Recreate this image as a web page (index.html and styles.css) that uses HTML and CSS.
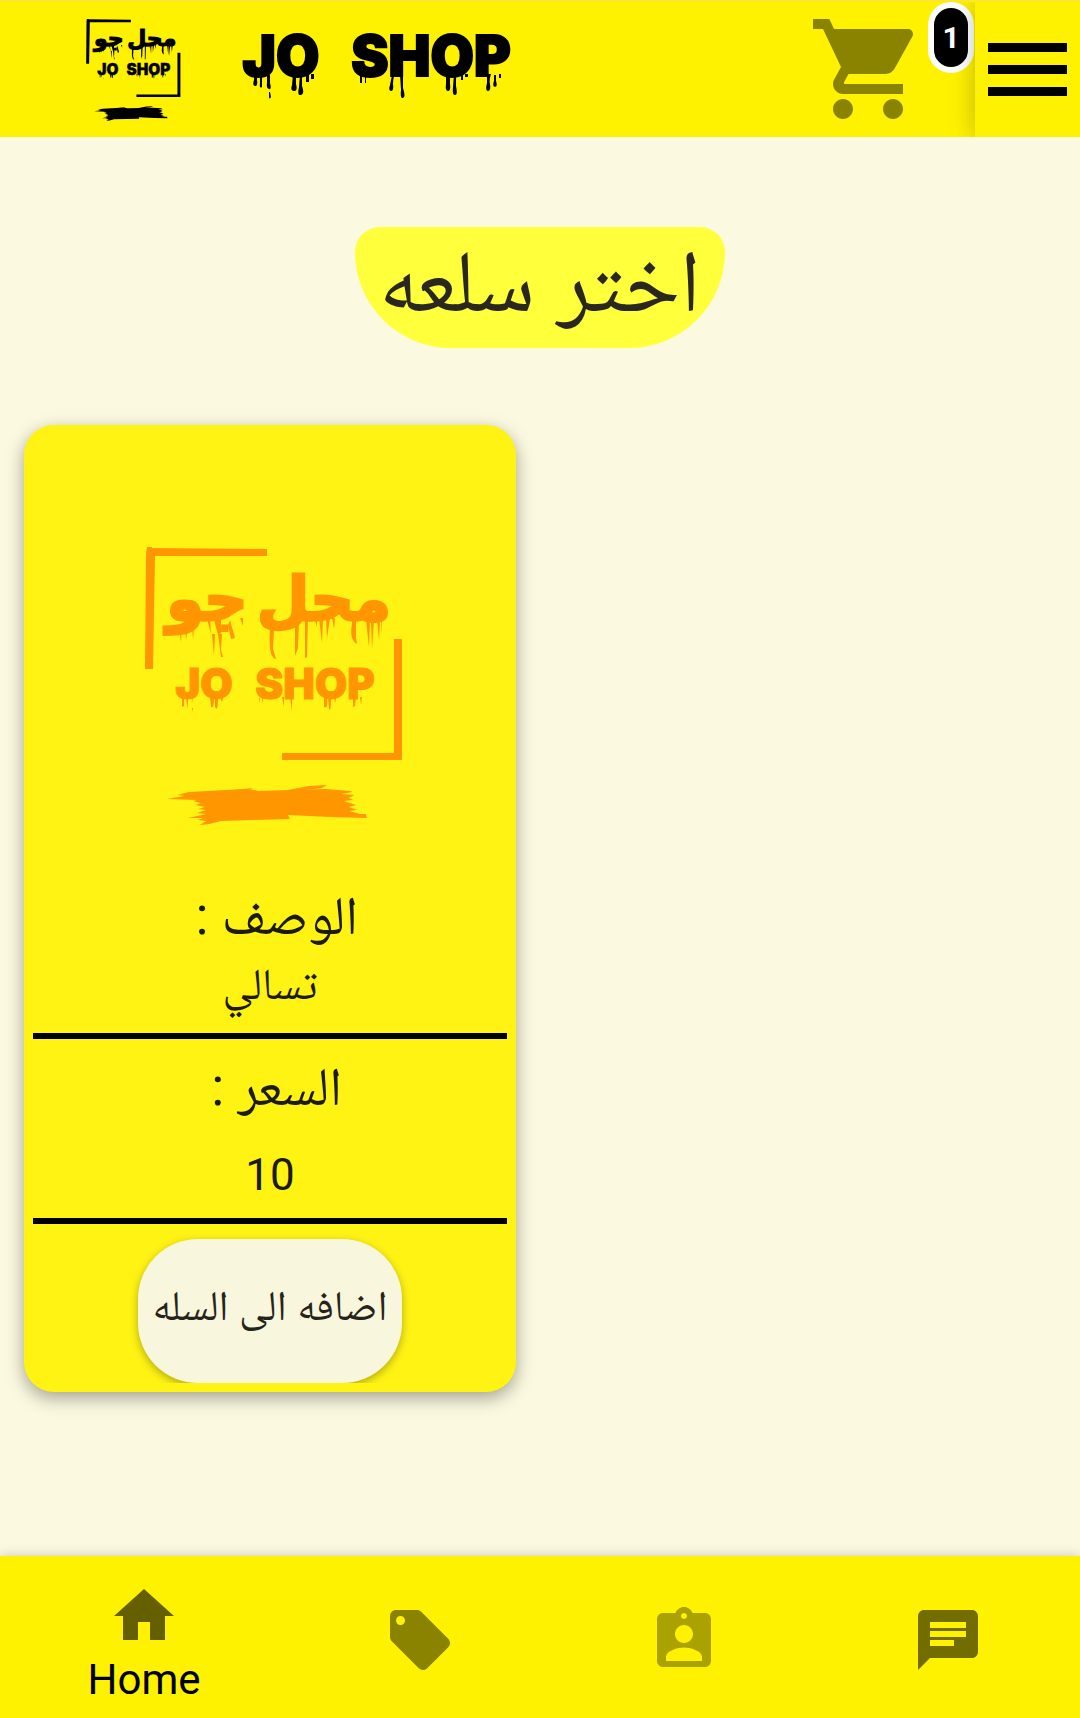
FILE: index.html
```html
<!DOCTYPE html>
<html lang="ar">
<head>
<meta charset="utf-8">
<meta name="viewport" content="width=device-width, initial-scale=1">
<title>JO SHOP</title>
<link rel="stylesheet" href="styles.css">
</head>
<body>
<svg class="defs" aria-hidden="true">
  <symbol id="logo" viewBox="-5 0 310 330">
    <path d="M27 27h5v1l115 1v7H35L33 149h-8L26 33z"/>
    <path d="M274 119h8v121H162v-7h112z"/>
    <text class="logo-ar" x="204" y="100" text-anchor="middle">محل</text>
    <text class="logo-ar" x="87" y="100" text-anchor="middle">جو</text>
    <text class="logo-en" x="84" y="179" text-anchor="middle">JO</text>
    <text class="logo-en" x="195" y="179" text-anchor="middle">SHOP</text>
    <path d="M59 108l3 0-1 14zM65 108h3l-2 12zM72 108h2l-1 11zM87 99h3l1 15zM94 100h7l0 13-3 2zM92 114l3 0-1 22zM98 114l4 0-1 16 2 7-2 0zM110 100l5 18-4 1-3-14zM120 98h3l0 8zM150 110l4 0-1 19 3 10q-8-1-6-29zM175 100l4 0-1 28-3 8zM185 98h3l-1 39-2 1zM194 98h3l0 9zM199 98l4 0-1 25zM206 98h4l-3 20zM212 98h3l-1 11zM232 100l4 1 0 16 1 7q-8-4-5-20zM246 100h4l-1 27zM251 100h3l-2 29zM257 100h3l-1 20zM261 98h1l-1 17z"/>
    <path d="M62 178h2l0 8-2 1zM66 178h2l0 11zM72 177h1v6zM72 188h1v4zM90 178h4q0 11-3 9zM95 178h3q0 15-3 9zM100 178h3l-1 4zM139 178h1v5zM142 178h1v6zM162 177h2v10zM170 176h2v16zM204 178h3q1 12-3 9zM208 178h3q0 15-2 11zM214 178h2l-1 5zM233 176h3l-1 10-2 1zM240 177h2l-1 8z"/>
    <g transform="scale(.96 1)">
      <path d="M49 279l18-3-7-1 12-3 38-2 24-1 10 2 32-1 38-1 26 2 2 1-12 2 14 1-6 3 5 2-10 1 13 4-8 2 9 3-8 1 11 3 6 0 1 4-38-1-44-2 2 4-37 1-35 1-12 3-10 1 7-4-9-1 6-2-16 0 19-4-10-1 10-3-8-1 6-2-9-2 5-2-8-2 4-1z"/>
      <path d="M105 271l34-3-8 3zM175 270l22-4 19-1-6 3-24 3z"/>
    </g>
  </symbol>
</svg>

<header class="topbar">
  <div class="brand">
    <svg class="brand-mark" role="img" aria-label="JO SHOP"><use href="#logo"/></svg>
    <svg class="brand-name" viewBox="0 -16 300 96">
      <text x="50" y="49" text-anchor="middle">JO</text>
      <text x="200" y="49" text-anchor="middle">SHOP</text>
      <path d="M23 45h3v8q1 6-2 6t-1-6zM29 48h2v12q-3 2-2-4zM36 48h3v8q2 7-1 6t-2-6zM38 65h1l1 5q-2 3-2 0zM62 47h3v10q2 7-2 7t-2-6zM69 47h2v12q3 8-1 9t-2-8zM75 47h3v8h-3zM80 47h3v5h-3zM129 48h2v8h-2zM134 48h1v8h-1zM161 48l2 1q-1 4-1 8 1 7-2 7t-1-6zM169 47h3v14q3 9 0 10t-2-8zM215 47h4v10q1 7-2 7t-2-7zM223 47h2v12q2 9-1 9t-2-8zM230 47h2v6h-2zM234 47h3v3h-3zM256 47h4q-2 6-1 10 1 7-2 7t-1-8zM263 48h2v6q2 6-1 6t-1-6zM268 47h2v4h-2z"/>
    </svg>
  </div>
  <button class="cart" type="button" aria-label="Cart">
    <svg viewBox="0 0 24 24" aria-hidden="true"><path d="M7 18c-1.100 0-1.990.9-1.990 2S5.900 22 7 22s2-.9 2-2-.9-2-2-2zM1 2v2h2l3.600 7.590-1.350 2.450c-.16.280-.25.610-.25.960 0 1.100.9 2 2 2h12v-2H7.420c-.14 0-.25-.11-.25-.25l.03-.12.900-1.630h7.450c.75 0 1.410-.41 1.750-1.030l3.580-6.490c.08-.14.120-.31.120-.48 0-.55-.45-1-1-1H5.210l-.94-2H1zm16 16c-1.100 0-1.990.9-1.990 2s.89 2 1.990 2 2-.9 2-2-.9-2-2-2z"/></svg>
    <span class="badge">1</span>
  </button>
  <button class="menu" type="button" aria-label="Menu"><span></span><span></span><span></span></button>
</header>

<main class="content" dir="rtl">
  <h1 class="title">اختر سلعه</h1>
  <section class="products">
    <article class="card">
      <svg class="card-logo" role="img" aria-label="JO SHOP"><use href="#logo"/></svg>
      <div class="field">
        <h2>الوصف :&nbsp;</h2>
        <p>تسالي</p>
      </div>
      <div class="field price">
        <h2>السعر :&nbsp;</h2>
        <p>10</p>
      </div>
      <div class="action">
        <button class="add" type="button">اضافه الى السله</button>
      </div>
    </article>
  </section>
</main>

<nav class="tabs">
  <a class="tab active" href="#home">
    <svg viewBox="0 0 24 24" aria-hidden="true"><path d="M10 20v-6h4v6h5v-8h3L12 3 2 12h3v8z"/></svg>
    <span>Home</span>
  </a>
  <a class="tab offers" href="#offers" aria-label="Offers">
    <svg viewBox="0 0 24 24" aria-hidden="true"><path d="M21.410 11.580l-9-9C12.050 2.220 11.550 2 11 2H4c-1.100 0-2 .9-2 2v7c0 .55.220 1.050.590 1.420l9 9c.36.360.860.580 1.410.580.550 0 1.050-.22 1.410-.59l7-7c.37-.36.590-.86.590-1.410 0-.55-.23-1.060-.59-1.420zM5.500 7C4.670 7 4 6.330 4 5.500S4.670 4 5.500 4 7 4.670 7 5.500 6.330 7 5.500 7z"/></svg>
  </a>
  <a class="tab account" href="#account" aria-label="Account">
    <svg viewBox="0 0 24 24" aria-hidden="true"><path d="M19 3h-4.180C14.400 1.840 13.300 1 12 1c-1.300 0-2.400.84-2.820 2H5c-1.100 0-2 .9-2 2v14c0 1.100.9 2 2 2h14c1.100 0 2-.9 2-2V5c0-1.100-.9-2-2-2zm-7 0c.55 0 1 .45 1 1s-.45 1-1 1-1-.45-1-1 .45-1 1-1zm0 4c1.660 0 3 1.340 3 3s-1.340 3-3 3-3-1.340-3-3 1.340-3 3-3zm6 12H6v-1.400c0-2 4-3.100 6-3.100s6 1.100 6 3.100V19z"/></svg>
  </a>
  <a class="tab chat" href="#chat" aria-label="Chat">
    <svg viewBox="0 0 24 24" aria-hidden="true"><path d="M20 2H4c-1.100 0-1.990.9-1.990 2L2 22l4-4h14c1.100 0 2-.9 2-2V4c0-1.100-.9-2-2-2zM6 9h12v2H6V9zm8 5H6v-2h8v2zm4-6H6V6h12v2z"/></svg>
  </a>
</nav>
</body>
</html>
```
FILE: styles.css
```css
* {
  box-sizing: border-box;
}

body {
  margin: 0;
  min-height: 100vh;
  display: flex;
  flex-direction: column;
  background: #fbf9df;
  color: #1c1a08;
  font-family: Roboto, "Noto Naskh Arabic", "Noto Sans Arabic", "DejaVu Sans", sans-serif;
}

h1, h2, p {
  margin: 0;
  font-weight: 400;
}

button {
  border: 0;
  padding: 0;
  background: none;
  color: inherit;
  font: inherit;
}

.defs {
  display: none;
}

.logo-ar {
  font-family: "DejaVu Sans", sans-serif;
  font-size: 60px;
  font-weight: 700;
  stroke: currentColor;
  stroke-width: 3px;
}

.logo-en,
.brand-name text {
  font-family: Inter, sans-serif;
  font-weight: 900;
  stroke: currentColor;
}

.logo-en {
  font-size: 42px;
  stroke-width: 1px;
}

.topbar {
  display: flex;
  height: 137px;
  background: #fff200;
  border-top: 2px solid #fbe82c;
}

.brand {
  flex: 1;
  display: flex;
  align-items: flex-start;
  gap: 42px;
  padding: 7px 0 0 75px;
  color: #000;
}

.brand-mark {
  width: 114px;
  height: 121px;
}

.brand-name {
  width: 300px;
  height: 96px;
  margin-top: 2px;
}

.brand-name text {
  font-size: 56px;
  stroke-width: 2px;
}

.cart {
  display: flex;
  align-items: flex-start;
  width: 167px;
  padding-top: 7px;
  position: relative;
}

.cart svg {
  width: 120px;
  height: 120px;
  fill: #8a8300;
}

.badge {
  position: absolute;
  top: 0;
  right: 1px;
  width: 46px;
  height: 71px;
  border: 6px solid #fff;
  border-radius: 23px;
  background: #000;
  color: #fff;
  font-size: 30px;
  font-weight: 700;
  line-height: 60px;
  text-align: center;
}

.menu {
  width: 105px;
  display: flex;
  flex-direction: column;
  align-items: center;
  justify-content: center;
  gap: 13px;
  background: #fff200;
  box-shadow: 0 0 24px rgba(0, 0, 0, 0.25);
  clip-path: inset(0 0 0 -40px);
  z-index: 1;
}

.menu span {
  width: 79px;
  height: 9px;
  background: #000;
}

.content {
  flex: 1;
  display: flex;
  flex-direction: column;
  align-items: center;
  gap: 77px;
  padding: 90px 24px 120px;
}

.title {
  padding: 0 24px 14px;
  border-radius: 25px 25px 96px 96px;
  background: #ffff3c;
  color: #2a281e;
  font-size: 88px;
  line-height: 107px;
}

.products {
  direction: ltr;
  align-self: stretch;
  display: grid;
  grid-template-columns: 1fr 1fr;
  gap: 48px;
}

.card {
  direction: rtl;
  display: flex;
  flex-direction: column;
  align-items: center;
  padding: 95px 9px 9px;
  border-radius: 30px;
  background: #fff314;
  box-shadow: 0 6px 18px rgba(0, 0, 0, 0.35);
  text-align: center;
}

.card-logo {
  direction: ltr;
  width: 310px;
  height: 330px;
  color: #ff9600;
  fill: #ff9600;
}

.field {
  align-self: stretch;
  padding: 30px 0 16px;
  border-bottom: 6px solid #000;
}

.field h2 {
  font-size: 54px;
  line-height: 72px;
}

.field p {
  font-size: 44px;
  line-height: 65px;
}

.price {
  padding: 12px 0 5px;
}

.price p {
  padding-top: 14px;
  line-height: 76px;
}

.action {
  align-self: stretch;
  padding-top: 15px;
  overflow: hidden;
}

.add {
  width: 264px;
  height: 144px;
  border-radius: 60px;
  background: #f8f6dc;
  box-shadow: 0 3px 9px rgba(0, 0, 0, 0.3);
  color: #26241a;
  font-size: 42px;
}

.tabs {
  position: sticky;
  bottom: 0;
  display: flex;
  height: 162px;
  background: #fff200;
  box-shadow: 0 0 12px rgba(0, 0, 0, 0.2);
}

.tab {
  flex: 11;
  display: flex;
  flex-direction: column;
  align-items: center;
  padding-top: 48px;
  color: #000;
  font-size: 42px;
  line-height: 48px;
  text-decoration: none;
}

.tab svg {
  width: 72px;
  height: 72px;
}

.active {
  flex: 12;
  padding-top: 24px;
}

.active svg {
  margin-bottom: 4px;
  fill: #665f00;
}

.offers svg {
  fill: #8a8300;
}

.account svg {
  fill: #aaa200;
}

.chat svg {
  fill: #736d00;
}
```
